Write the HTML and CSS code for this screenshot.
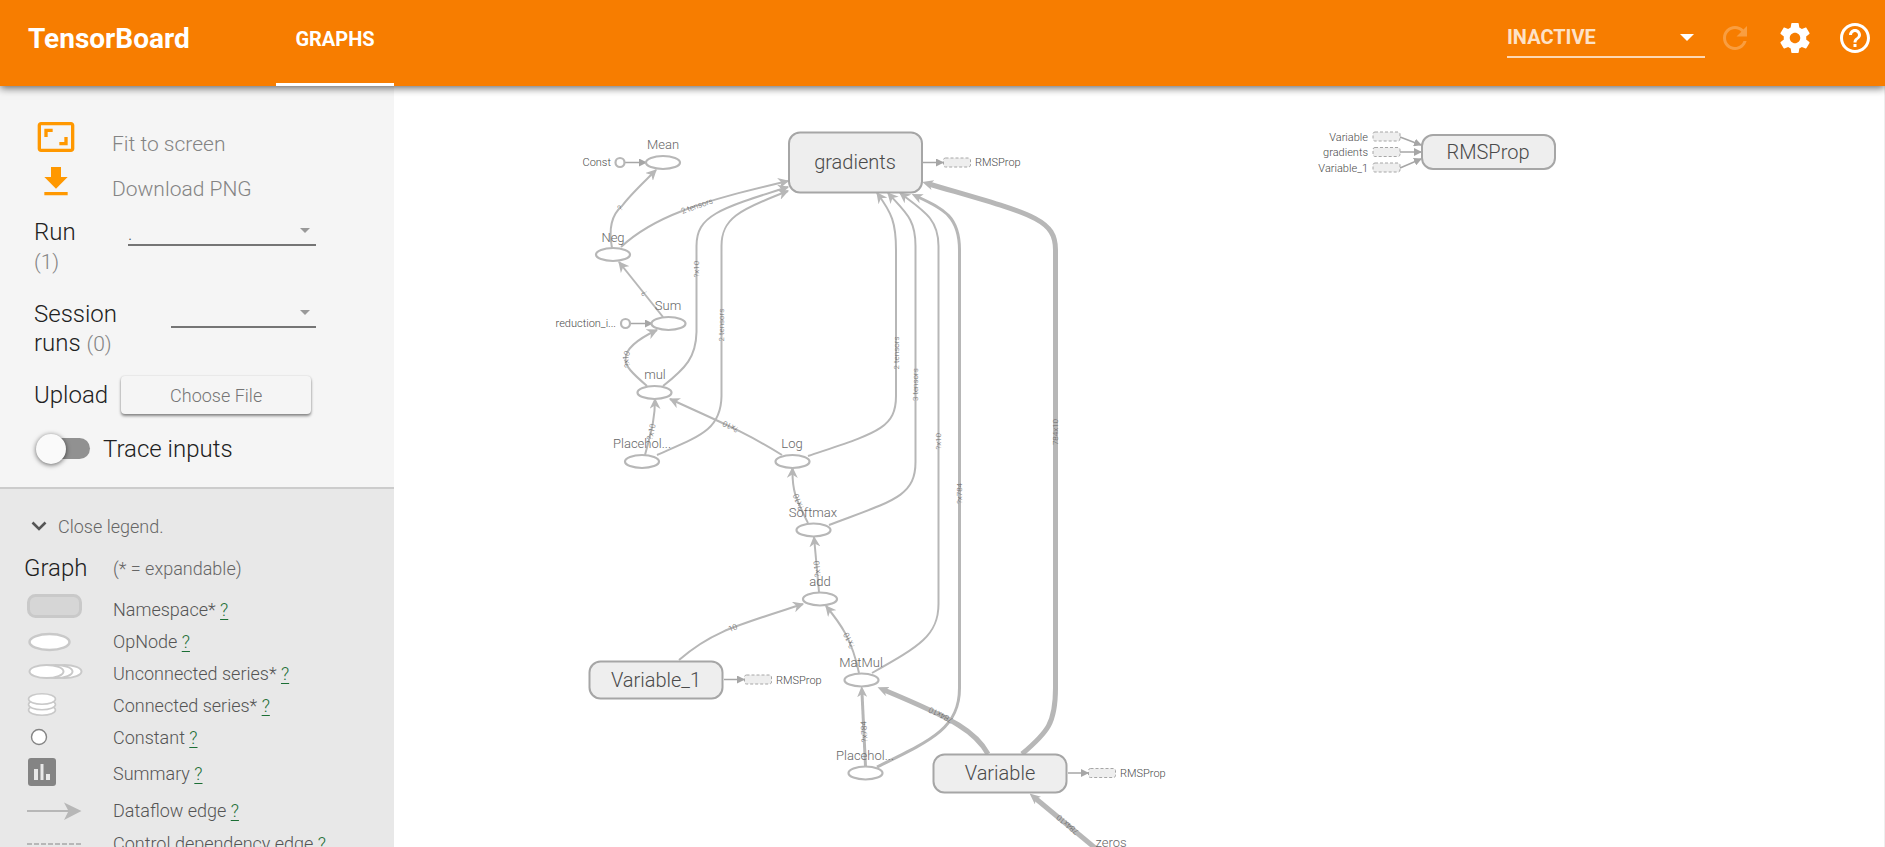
FILE: index.html
```html
<!DOCTYPE html>
<html lang="en">
<head>
<meta charset="utf-8">
<title>TensorBoard</title>
<link rel="stylesheet" href="styles.css">
</head>
<body>
<header class="toolbar">
  <h1 class="brand">TensorBoard</h1>
  <nav class="tabs"><button class="tab" type="button">GRAPHS</button></nav>
  <div class="toolbar-end">
    <div class="inactive">
      <select class="inactive-select" aria-label="Inactive dashboards"><option>INACTIVE</option></select>
      <svg class="inactive-caret" width="14" height="7" viewBox="0 0 14 7"><path d="M0 0h14L7 7z"/></svg>
    </div>
    <button class="icon-btn dim" type="button" aria-label="Reload"><svg viewBox="0 0 24 24"><path d="M17.65 6.35C16.2 4.9 14.21 4 12 4c-4.42 0-7.99 3.58-7.99 8s3.57 8 7.99 8c3.73 0 6.84-2.55 7.73-6h-2.08c-.82 2.33-3.04 4-5.65 4-3.31 0-6-2.69-6-6s2.69-6 6-6c1.66 0 3.14.69 4.22 1.78L13 11h7V4l-2.35 2.35z"/></svg></button>
    <button class="icon-btn" type="button" aria-label="Settings"><svg viewBox="0 0 24 24"><path d="M19.43 12.98c.04-.32.07-.64.07-.98s-.03-.66-.07-.98l2.11-1.65c.19-.15.24-.42.12-.64l-2-3.46c-.12-.22-.39-.3-.61-.22l-2.49 1c-.52-.4-1.08-.73-1.69-.98l-.38-2.65C14.46 2.18 14.25 2 14 2h-4c-.25 0-.46.18-.49.42l-.38 2.65c-.61.25-1.17.59-1.69.98l-2.49-1c-.23-.09-.49 0-.61.22l-2 3.46c-.13.22-.07.49.12.64l2.11 1.65c-.04.32-.07.65-.07.98s.03.66.07.98l-2.11 1.65c-.19.15-.24.42-.12.64l2 3.46c.12.22.39.3.61.22l2.49-1c.52.4 1.08.73 1.69.98l.38 2.65c.03.24.24.42.49.42h4c.25 0 .46-.18.49-.42l.38-2.65c.61-.25 1.17-.59 1.69-.98l2.49 1c.23.09.49 0 .61-.22l2-3.46c.12-.22.07-.49-.12-.64l-2.11-1.65zM12 15.5c-1.93 0-3.5-1.57-3.5-3.5s1.57-3.5 3.5-3.5 3.5 1.57 3.5 3.5-1.57 3.5-3.5 3.5z"/></svg></button>
    <button class="icon-btn" type="button" aria-label="Help"><svg viewBox="0 0 24 24"><path d="M11 18h2v-2h-2v2zm1-16C6.48 2 2 6.48 2 12s4.48 10 10 10 10-4.48 10-10S17.52 2 12 2zm0 18c-4.41 0-8-3.59-8-8s3.59-8 8-8 8 3.59 8 8-3.59 8-8 8zm0-14c-2.21 0-4 1.79-4 4h2c0-1.1.9-2 2-2s2 .9 2 2c0 2-3 1.75-3 5h2c0-2.25 3-2.5 3-5 0-2.21-1.79-4-4-4z"/></svg></button>
  </div>
</header>
<div class="workspace">
  <aside class="sidebar">
    <section class="controls">
      <button class="action" type="button"><svg viewBox="0 0 24 24"><path d="M19 12h-2v3h-3v2h5v-5zM7 9h3V7H5v5h2V9zm14-6H3c-1.1 0-2 .9-2 2v14c0 1.1.9 2 2 2h18c1.1 0 2-.9 2-2V5c0-1.1-.9-2-2-2zm0 16.01H3V4.99h18v14.02z"/></svg><span>Fit to screen</span></button>
      <button class="action" type="button"><svg viewBox="0 0 24 24"><path d="M19 9h-4V3H9v6H5l7 7 7-7zM5 18v2h14v-2H5z"/></svg><span>Download PNG</span></button>
      <div class="field field-run">
        <label class="field-label" for="run">Run <span class="count">(1)</span></label>
        <div class="picker"><select id="run"><option>.</option></select><svg class="caret" width="10" height="5" viewBox="0 0 10 5"><path d="M0 0h10L5 5z"/></svg></div>
      </div>
      <div class="field field-session">
        <label class="field-label" for="session">Session runs <span class="count">(0)</span></label>
        <div class="picker"><select id="session"><option></option></select><svg class="caret" width="10" height="5" viewBox="0 0 10 5"><path d="M0 0h10L5 5z"/></svg></div>
      </div>
      <div class="upload"><span>Upload</span><button class="choose" type="button">Choose File</button></div>
      <label class="trace"><input class="toggle" type="checkbox"><span>Trace inputs</span></label>
    </section>
    <section class="legend">
      <button class="close-legend" type="button"><svg width="16" height="10" viewBox="0 0 16 10"><path d="M1.500 1.500L8 8L14.500 1.500" fill="none" stroke="#555" stroke-width="2.600"/></svg>Close legend.</button>
      <div class="legend-head"><h2>Graph</h2><span>(* = expandable)</span></div>
      <ul class="legend-list">
        <li><svg viewBox="0 0 60 32"><rect x="4.500" y="1.500" width="52" height="21" rx="7" fill="#d6d6d6" stroke="#c9c9c9" stroke-width="3"/></svg><span>Namespace* <a href="#namespace">?</a></span></li>
        <li><svg viewBox="0 0 60 32"><ellipse cx="25.500" cy="16" rx="20" ry="8" fill="#fff" stroke="#c9c9c9" stroke-width="2.500"/></svg><span>OpNode <a href="#opnode">?</a></span></li>
        <li><svg viewBox="0 0 60 32" fill="#fff" stroke="#c9c9c9" stroke-width="2"><ellipse cx="40.500" cy="13.500" rx="17" ry="6.500"/><ellipse cx="31.500" cy="13.500" rx="17" ry="6.500"/><ellipse cx="22.500" cy="13.500" rx="17" ry="6.500"/></svg><span>Unconnected series* <a href="#series">?</a></span></li>
        <li><svg viewBox="0 0 60 32" fill="#fff" stroke="#c9c9c9" stroke-width="1.600"><ellipse cx="18" cy="20" rx="13.500" ry="5.200"/><ellipse cx="18" cy="14.500" rx="13.500" ry="5.200"/><ellipse cx="18" cy="9" rx="13.500" ry="5.200"/></svg><span>Connected series* <a href="#connected">?</a></span></li>
        <li><svg viewBox="0 0 60 32"><circle cx="15" cy="15" r="7.500" fill="#fff" stroke="#848484" stroke-width="1.400"/></svg><span>Constant <a href="#constant">?</a></span></li>
        <li class="tall"><svg viewBox="0 0 60 32"><rect x="4" y="0" width="28" height="28" rx="3" fill="#848484"/><path d="M10 11h4v11h-4zM16.500 6h3v16h-3zM22 16h4v6h-4z" fill="#e8e8e8"/></svg><span>Summary <a href="#summary">?</a></span></li>
        <li class="tall"><svg viewBox="0 0 60 32"><path d="M3 16h44" stroke="#b7b7b7" stroke-width="2"/><path d="M40 7.500L57.500 16L40 25l4.500-9z" fill="#b7b7b7"/></svg><span>Dataflow edge <a href="#dataflow">?</a></span></li>
        <li><svg viewBox="0 0 60 32"><path d="M3 16h54" stroke="#b7b7b7" stroke-width="2" stroke-dasharray="5 2"/></svg><span>Control dependency edge <a href="#control">?</a></span></li>
      </ul>
    </section>
  </aside>
  <main class="canvas">
    <svg class="graph" role="img" aria-label="Computation graph">
      <defs>
        <marker id="arrow" viewBox="0 0 10 10" refX="9" refY="5" markerWidth="11" markerHeight="11" markerUnits="userSpaceOnUse" orient="auto"><path d="M0 0L10 5L0 10L3 5z" fill="#b7b7b7"/></marker>
        <marker id="arrow-wide" viewBox="0 0 11 10" refX="4" refY="5" markerWidth="11" markerHeight="10" markerUnits="userSpaceOnUse" orient="auto"><path d="M0 0L11 5L0 10L3 5z" fill="#b7b7b7"/></marker>
        <marker id="tri" viewBox="0 0 8 8" refX="7" refY="4" markerWidth="8" markerHeight="8" markerUnits="userSpaceOnUse" orient="auto"><path d="M0 0L8 4L0 8z" fill="#a6a6a6"/></marker>
      </defs>
      <g transform="translate(-394 -86)">
        <g class="edges">
          <path id="e1" d="M612 248C609 232 610 216 622 206C630 195 640 186 656 170"/>
          <path id="e2" d="M621 247C636 233 656 221 682 211C712 199 750 190 788 181"/>
          <path id="e3" d="M663 386C686 368 696 357 696.500 332V246C696.500 216 718 209 788 187"/>
          <path id="e4" d="M657 455C700 436 721 430 721.500 396V246C721.500 219 738 210 788 191"/>
          <path id="e5" d="M663 317L619 262"/>
          <path id="e6" d="M647 386C632 373 625 366 625.500 359C625.500 348 640 338 657 330"/>
          <path id="e7" d="M645 455C651 432 655 420 655 399"/>
          <path id="e8" d="M782 455C745 432 720 422 670 399"/>
          <path id="e9" d="M808 523C796 499 792 492 792.500 468"/>
          <path id="e10" d="M819 592L814 537"/>
          <path id="e11" d="M679 660C711 632 735 626 803 604"/>
          <path id="e12" d="M859 673C852 639 840 623 826 606"/>
          <path id="e13" d="M808 456C876 433 896 429 896 396V250C896 223 892 213 877 193"/>
          <path id="e14" d="M829 525C892 501 915.500 497 915.500 462V246C915.500 219 906 213 888 193"/>
          <path id="e15" d="M872 673C920 646 938.500 635 938.500 604V246C938.500 219 924 211 900 193"/>
          <path id="e16" class="mid" d="M877 767C932 740 959.500 728 959.500 688V250C959.500 217 944 209 918 197"/>
          <path id="e17" class="mid" d="M865.500 766L862 693"/>
          <path id="e18" class="thick" d="M988 754C976 732 956 720 884 690"/>
          <path id="e19" class="thick" d="M1022 754C1048 732 1055.500 723 1055.500 688V250C1055.500 218 1031 214 929 184"/>
          <path id="e20" class="thick" d="M1112 862L1035 798"/>
        </g>
        <g class="edge-labels">
          <text><textPath href="#e1" startOffset="45%">?</textPath></text>
          <text><textPath href="#e2" startOffset="48%">2 tensors</textPath></text>
          <text><textPath href="#e3" startOffset="48%">?x10</textPath></text>
          <text><textPath href="#e4" startOffset="49%">2 tensors</textPath></text>
          <text><textPath href="#e5" startOffset="43%">?</textPath></text>
          <text><textPath href="#e6" startOffset="44%">?x10</textPath></text>
          <text><textPath href="#e7" startOffset="42%">?x10</textPath></text>
          <text><textPath href="#e8" startOffset="47%">?x10</textPath></text>
          <text><textPath href="#e9" startOffset="40%">?x10</textPath></text>
          <text><textPath href="#e10" startOffset="42%">?x10</textPath></text>
          <text><textPath href="#e11" startOffset="46%">10</textPath></text>
          <text><textPath href="#e12" startOffset="45%">?x10</textPath></text>
          <text><textPath href="#e13" startOffset="49%">2 tensors</textPath></text>
          <text><textPath href="#e14" startOffset="49%">3 tensors</textPath></text>
          <text><textPath href="#e15" startOffset="50%">?x10</textPath></text>
          <text><textPath href="#e16" startOffset="50%">?x784</textPath></text>
          <text><textPath href="#e17" startOffset="47%">?x784</textPath></text>
          <text><textPath href="#e18" startOffset="50%">784x10</textPath></text>
          <text><textPath href="#e19" startOffset="50%">784x10</textPath></text>
          <text><textPath href="#e20" startOffset="58%">784x10</textPath></text>
        </g>
        <g class="notes">
          <path d="M625 162.500H646"/><path d="M630 323.500H652"/>
          <path d="M923 162.500H943"/><path d="M724 679.500H744"/><path d="M1068 773H1088"/>
          <path d="M1400 137L1421 145"/><path d="M1400 152H1421"/><path d="M1400 168L1421 159"/>
        </g>
        <g class="ops">
          <circle cx="620" cy="162.500" r="4.500"/><circle cx="625.500" cy="323.500" r="4.500"/>
          <ellipse cx="663" cy="162.500" rx="17" ry="6.500"/>
          <ellipse cx="613" cy="254.500" rx="17" ry="6.500"/>
          <ellipse cx="668.500" cy="323.500" rx="17" ry="6.500"/>
          <ellipse cx="654.500" cy="392.500" rx="17" ry="6.500"/>
          <ellipse cx="642" cy="461.500" rx="17" ry="6.500"/>
          <ellipse cx="792.500" cy="461.500" rx="17" ry="6.500"/>
          <ellipse cx="813.500" cy="530" rx="17" ry="6.500"/>
          <ellipse cx="820" cy="599" rx="17" ry="6.500"/>
          <ellipse cx="861.500" cy="680" rx="17" ry="6.500"/>
          <ellipse cx="865.500" cy="773" rx="17" ry="6.500"/>
        </g>
        <g class="stubs">
          <rect x="943.500" y="158" width="27" height="9" rx="2"/>
          <rect x="744.500" y="675" width="27" height="9" rx="2"/>
          <rect x="1088.500" y="768.500" width="27" height="9" rx="2"/>
          <rect x="1373" y="132" width="27" height="9" rx="2"/>
          <rect x="1373" y="147.500" width="27" height="9" rx="2"/>
          <rect x="1373" y="163" width="27" height="9" rx="2"/>
        </g>
        <g class="spaces">
          <rect x="789" y="132.500" width="133" height="60" rx="11"/>
          <rect x="589.500" y="661.500" width="133" height="37" rx="11"/>
          <rect x="933.500" y="754.500" width="133" height="38" rx="11"/>
          <rect x="1422" y="135" width="133" height="34" rx="11"/>
        </g>
        <g class="space-names">
          <text x="855" y="169">gradients</text><text x="656" y="687">Variable_1</text>
          <text x="1000" y="780">Variable</text><text x="1488" y="159">RMSProp</text>
        </g>
        <g class="op-names">
          <text x="663" y="149">Mean</text><text x="613" y="242">Neg</text><text x="668" y="310">Sum</text>
          <text x="655" y="379">mul</text><text x="642" y="448">Placehol...</text><text x="792" y="448">Log</text>
          <text x="813" y="517">Softmax</text><text x="820" y="586">add</text><text x="861" y="667">MatMul</text>
          <text x="865" y="760">Placehol...</text><text x="1111" y="847">zeros</text>
        </g>
        <g class="note-names">
          <text class="end" x="611" y="166">Const</text><text class="end" x="616" y="327">reduction_i...</text>
          <text x="975" y="166">RMSProp</text><text x="776" y="684">RMSProp</text><text x="1120" y="777">RMSProp</text>
          <text class="end" x="1368" y="141">Variable</text><text class="end" x="1368" y="156">gradients</text><text class="end" x="1368" y="172">Variable_1</text>
        </g>
      </g>
    </svg>
  </main>
</div>
</body>
</html>
```
FILE: styles.css
```css
* { box-sizing: border-box; }
body {
  margin: 0;
  height: 100vh;
  display: flex;
  flex-direction: column;
  overflow: hidden;
  font-family: Roboto, "Liberation Sans", sans-serif;
  font-weight: 300;
  color: #212121;
}
button, select { font: inherit; color: inherit; border: 0; background: none; padding: 0; margin: 0; }
h1, h2, ul { margin: 0; padding: 0; font-weight: inherit; }

.toolbar {
  position: relative;
  z-index: 1;
  display: flex;
  height: 86px;
  flex: none;
  padding: 0 12px 0 28px;
  background: #f77d00;
  color: #fff;
  box-shadow: 0 2px 8px rgba(0, 0, 0, .6);
}
.brand { width: 248px; font-size: 28px; font-weight: 700; line-height: 78px; }
.tabs { display: flex; }
.tab { width: 118px; font-size: 20px; font-weight: 700; padding-bottom: 6px; border-bottom: 3px solid #fff; }
.toolbar-end { margin-left: auto; display: flex; align-items: flex-start; gap: 24px; padding-top: 20px; }
.inactive { position: relative; width: 198px; margin-right: -12px; }
.inactive-select {
  appearance: none;
  width: 100%;
  height: 38px;
  padding-bottom: 2px;
  font-size: 20px;
  font-weight: 700;
  color: rgba(255, 255, 255, .8);
  border-bottom: 2px solid rgba(255, 255, 255, .7);
}
.inactive-caret { position: absolute; right: 11px; top: 14px; fill: #fff; }
.icon-btn { width: 36px; height: 36px; }
.icon-btn svg { display: block; width: 36px; height: 36px; fill: #fff; }
.dim { opacity: .25; }

.workspace { flex: 1; min-height: 0; display: flex; }
.sidebar { width: 394px; flex: none; display: flex; flex-direction: column; overflow: hidden; background: #f5f5f5; }
.controls { padding: 31px 78px 23px 34px; flex: none; font-size: 24px; line-height: 29px; }
.action { display: flex; align-items: flex-start; gap: 36px; height: 45px; padding-left: 2px; font-size: 21px; color: #848484; }
.action svg { width: 40px; height: 40px; fill: #ff9800; }
.action span { padding-top: 13px; }
.field { display: flex; justify-content: space-between; }
.field-label { width: 84px; }
.count { font-size: 21px; color: #848484; }
.field-run { margin-top: 11px; height: 82px; }
.field-run .field-label { width: 50px; }
.field-run .picker { width: 188px; }
.field-session .picker { width: 145px; }
.picker { position: relative; height: 27px; }
.picker select { appearance: none; width: 100%; height: 27px; border-bottom: 2px solid #757575; font-size: 18px; color: #555; }
.caret { position: absolute; right: 6px; top: 10px; fill: #999; }
.upload { display: flex; align-items: center; gap: 13px; margin-top: 17px; }
.choose {
  width: 190px;
  height: 38px;
  font-size: 18px;
  color: #757575;
  border-radius: 4px;
  box-shadow: 0 2px 3px rgba(0, 0, 0, .45), 0 0 2px rgba(0, 0, 0, .12);
}
.trace { display: flex; align-items: center; gap: 13px; margin-top: 20px; padding-left: 2px; }
.toggle { appearance: none; position: relative; margin: 0; width: 54px; height: 30px; }
.toggle::before { content: ""; position: absolute; left: 10px; right: 0; top: 4px; bottom: 5px; border-radius: 11px; background: #919191; }
.toggle::after { content: ""; position: absolute; left: 0; top: 0; width: 30px; height: 30px; border-radius: 50%; background: #fafafa; box-shadow: 0 1px 5px rgba(0, 0, 0, .6); }

.legend { flex: 1; border-top: 2px solid #ccc; background: #e8e8e8; padding: 24px 24px 0; font-size: 18px; color: #555; }
.close-legend { display: flex; align-items: center; gap: 11px; height: 26px; padding-left: 7px; color: #666; }
.legend-head { display: grid; grid-template-columns: 89px 1fr; align-items: start; padding-top: 15px; height: 55px; line-height: 29px; color: #666; }
.legend-head h2 { font-size: 24px; color: #212121; }
.legend-list { list-style: none; line-height: 32px; }
.legend-list li { display: grid; grid-template-columns: 89px 1fr; height: 32px; white-space: nowrap; }
.legend-list svg { width: 60px; height: 32px; }
.legend-list a { color: #1b6e35; text-underline-offset: 3px; }
.legend-list .tall { height: 36px; padding-top: 4px; margin-bottom: 1px; }

.canvas { flex: 1; min-width: 0; overflow: hidden; background: #fff; border-right: 1px solid #eee; }
.graph { display: block; width: 100%; height: 100%; }
.edges path { fill: none; stroke: #b7b7b7; stroke-width: 2; marker-end: url(#arrow); }
.edges .mid { stroke-width: 3; marker-end: url(#arrow-wide); }
.edges .thick { stroke-width: 5; marker-end: url(#arrow-wide); }
.edge-labels { font-size: 8px; fill: #666; text-anchor: middle; dominant-baseline: central; }
.notes path { fill: none; stroke: #a6a6a6; stroke-width: 1.500; marker-end: url(#tri); }
.ops { fill: #fff; stroke: #b7b7b7; stroke-width: 2.200; }
.stubs { fill: #eee; stroke: #a6a6a6; stroke-dasharray: 3 2; }
.spaces { fill: #eee; stroke: #a6a6a6; stroke-width: 2; }
.space-names { font-size: 20px; fill: #4a4a4a; text-anchor: middle; }
.op-names { font-size: 13px; fill: #666; text-anchor: middle; }
.note-names { font-size: 11px; fill: #4a4a4a; }
.note-names .end { text-anchor: end; }
```
